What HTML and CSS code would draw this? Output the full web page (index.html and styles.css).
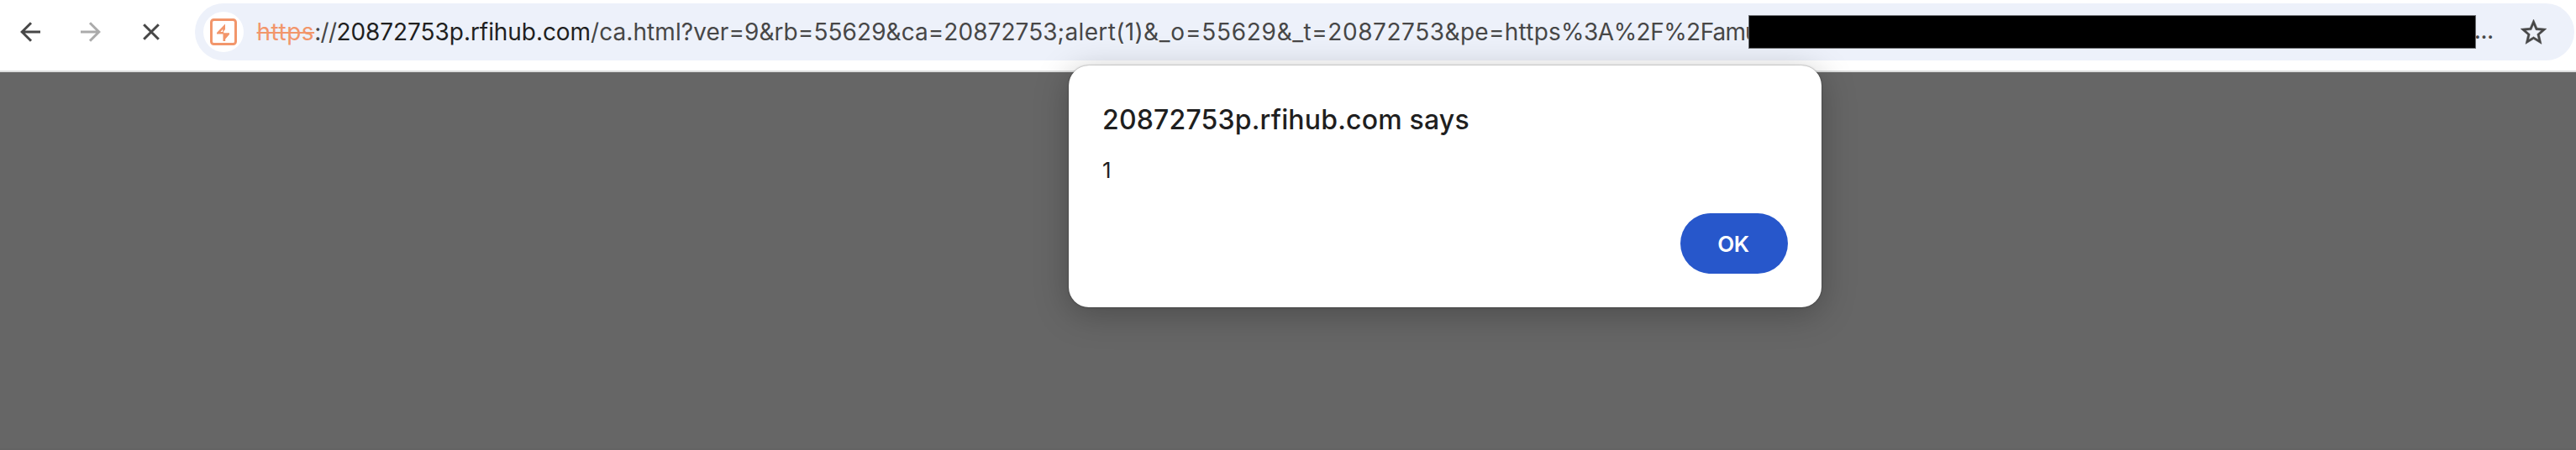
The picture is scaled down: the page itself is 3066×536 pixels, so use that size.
FILE: index.html
```html
<!DOCTYPE html>
<html lang="en">
<head>
<meta charset="utf-8">
<title>20872753p.rfihub.com</title>
<link rel="stylesheet" href="styles.css">
</head>
<body>
<header class="toolbar">
  <svg class="nav-icon" viewBox="0 0 24 24"><path d="M24 12H3M13 1.2L2.2 12 13 22.8"/></svg>
  <svg class="nav-icon nav-icon-disabled" viewBox="0 0 24 24"><path d="M0 12h21M11 1.2L21.8 12 11 22.8"/></svg>
  <svg class="nav-icon" viewBox="0 0 24 24"><path d="M3.2 3.2l17.6 17.6M20.8 3.2L3.2 20.8"/></svg>
  <div class="omnibox">
    <span class="site-badge">
      <svg class="site-icon" viewBox="0 0 32 32"><rect x="1.5" y="1.5" width="29" height="29" rx="3"/><path fill-rule="evenodd" d="M18 6.5V13L16.2 15.2V17.2H23V19L18.2 24.5V27H15.5V18.6H8V17ZM15.2 12.8L12.4 16H15.2Z"/></svg>
    </span>
    <div class="url"><span class="scheme">https</span><span class="separator">://</span><span class="host">20872753p.rfihub.com</span><span class="p1">/ca.html?ver=9&amp;rb=55629</span><span class="p2">&amp;ca=20872753</span><span class="p3">;alert(1)</span><span class="p4">&amp;_o=55629</span><span class="p5">&amp;_t=20872753</span><span class="p6">&amp;pe=https</span><span class="p7">%3A%2F%2</span><span class="p8">Famu</span></div>
    <div class="redaction"></div>
    <span class="ellipsis">…</span>
    <svg class="star" viewBox="0 0 24 24"><path d="M22 9.24l-7.19-.62L12 2 9.19 8.63 2 9.24l5.46 4.73L5.82 21 12 17.27 18.18 21l-1.63-7.03L22 9.24zM12 15.4l-3.76 2.27 1-4.28-3.32-2.88 4.38-.38L12 6.1l1.71 4.04 4.38.38-3.32 2.88 1 4.28L12 15.4z"/></svg>
  </div>
</header>
<main class="page"></main>
<section class="dialog" role="alertdialog">
  <h1 class="dialog-title">20872753p.rfihub.com says</h1>
  <p class="dialog-message">1</p>
  <button class="ok-button">OK</button>
</section>
</body>
</html>
```
FILE: styles.css
```css
* { box-sizing: border-box; }
body {
  margin: 0;
  height: 536px;
  overflow: hidden;
  display: flex;
  flex-direction: column;
  background: #666;
  font-family: Inter, "Liberation Sans", sans-serif;
}
.toolbar {
  flex: none;
  display: flex;
  align-items: center;
  height: 86px;
  padding: 0 2px 8px 24px;
  gap: 48px;
  background: #fff;
  border-bottom: 2px solid #dcdddd;
}
.nav-icon {
  flex: none;
  width: 24px;
  height: 24px;
  overflow: visible;
  fill: none;
  stroke: #474747;
  stroke-width: 3;
}
.nav-icon-disabled { stroke: #ababab; }
.omnibox {
  flex: 1;
  display: flex;
  align-items: center;
  height: 68px;
  margin-left: -8px;
  padding: 0 30px 0 10px;
  border-radius: 34px;
  background: #edf1fa;
}
.site-badge {
  display: flex;
  align-items: center;
  justify-content: center;
  width: 48px;
  height: 48px;
  border-radius: 50%;
  background: #fff;
}
.site-icon { width: 32px; height: 32px; fill: #f2966b; }
.site-icon rect { fill: none; stroke: #f2966b; stroke-width: 3; }
.url {
  width: 1775.5px;
  margin-left: 15.5px;
  white-space: nowrap;
  font-size: 28px;
  line-height: 40px;
  color: #474747;
}
.scheme {
  color: #f2966b;
  letter-spacing: 0.5px;
  text-decoration: line-through;
  text-decoration-thickness: 2px;
}
.separator { letter-spacing: -0.65px; }
.host { color: #1f1f1f; letter-spacing: -0.06px; }
.p1 { letter-spacing: 0.067px; }
.p2 { letter-spacing: 0.05px; }
.p3 { letter-spacing: 0.36px; }
.p4 { letter-spacing: 0.73px; }
.p5 { letter-spacing: 0.55px; }
.p6 { letter-spacing: 0.26px; }
.p7 { letter-spacing: -0.53px; }
.p8 { letter-spacing: -0.9px; }
.redaction {
  position: relative;
  width: 866px;
  height: 40px;
  background: #000;
  border: 1px solid #6d6f73;
}
.ellipsis {
  width: 24px;
  margin-left: -2px;
  font-size: 24px;
  font-weight: 600;
  line-height: 40px;
  color: #474747;
}
.star {
  width: 37px;
  height: 37px;
  margin-left: auto;
  fill: #474747;
  stroke: #474747;
  stroke-width: 0.3;
}
.page {
  flex: 1;
  background: #666;
  border-bottom: 2px solid #636363;
}
.dialog {
  position: absolute;
  left: 1272px;
  top: 78px;
  width: 896px;
  height: 288px;
  display: flex;
  flex-direction: column;
  padding: 45px 40px 40px;
  border-radius: 24px;
  background: #fff;
  box-shadow: 0 0 2px rgba(0, 0, 0, 0.5), 0 8px 40px rgba(0, 0, 0, 0.26);
  color: #1f1f1f;
}
.dialog-title {
  margin: 0;
  font-size: 32px;
  font-weight: 500;
  line-height: 40px;
  letter-spacing: 0.18px;
}
.dialog-message {
  margin: 24px 0 0;
  font-size: 26px;
  line-height: 32px;
}
.ok-button {
  align-self: flex-end;
  width: 128px;
  height: 72px;
  margin-top: auto;
  padding: 0 2px 0 0;
  border: 0;
  border-radius: 36px;
  background: #2757cb;
  color: #fff;
  font-family: inherit;
  font-size: 26px;
  font-weight: 600;
  letter-spacing: -0.4px;
}
```
